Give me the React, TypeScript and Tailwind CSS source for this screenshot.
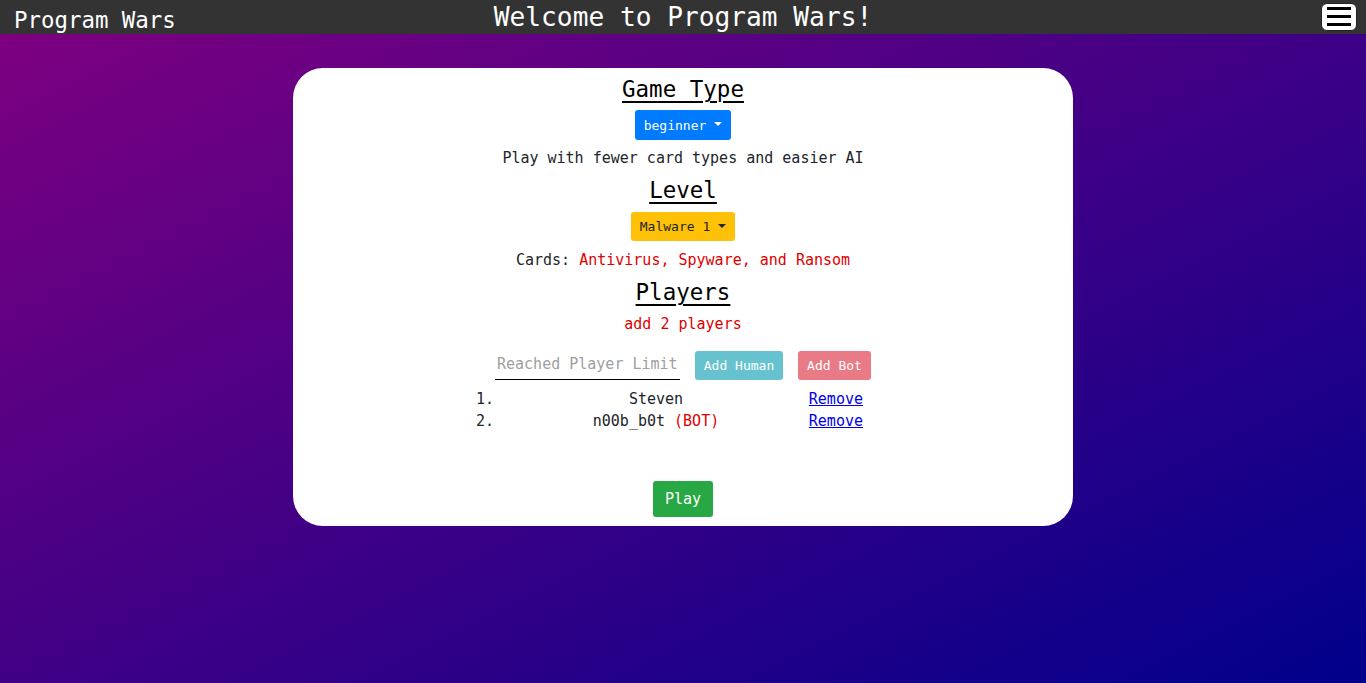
import React from 'react';

const mono = { fontFamily: '"DejaVu Sans Mono", "Liberation Mono", monospace' };

const players = [
  { name: 'Steven', bot: false },
  { name: 'n00b_b0t', bot: true },
];

const Caret = () => (
  <span className="inline-block ml-[8px] align-middle w-0 h-0 border-l-[4px] border-r-[4px] border-t-[4px] border-l-transparent border-r-transparent border-t-current relative top-[-2px]" />
);

export default function App() {
  return (
    <div
      className="w-full min-h-[683px] bg-[linear-gradient(to_bottom_right,#800080,#00008b)]"
      style={mono}
    >
      <header className="h-[34px] bg-[#333333] flex items-center justify-between px-[14px] relative">
        <span className="text-white text-[22.4px] leading-none mt-[7px]">Program Wars</span>
        <h1 className="absolute left-0 right-0 text-center text-white text-[26.2px] leading-none top-[4px] pointer-events-none">
          Welcome to Program Wars!
        </h1>
        <button className="w-[36px] h-[28px] bg-white rounded-[6px] border border-[#222] flex flex-col items-center justify-center gap-[5px] mr-[-5px] mt-[-1px]">
          <span className="block w-[24px] h-[3px] bg-black" />
          <span className="block w-[24px] h-[3px] bg-black" />
          <span className="block w-[24px] h-[3px] bg-black" />
        </button>
      </header>

      <main className="flex justify-center pt-[34px]">
        <div className="w-[780px] bg-white rounded-[30px] pt-[8px] pb-[9px] flex flex-col items-center text-[#212529]">
          <h2 className="text-[22.5px] leading-[27px] underline underline-offset-[4px] text-black">Game Type</h2>
          <button className="mt-[7px] h-[30px] px-[9px] rounded-[3px] bg-[#007bff] text-white text-[13px] leading-none">
            beginner<Caret />
          </button>
          <p className="mt-[7px] text-[15px] leading-[22px]">Play with fewer card types and easier AI</p>

          <h2 className="mt-[8px] text-[22.5px] leading-[27px] underline underline-offset-[4px] text-black">Level</h2>
          <button className="mt-[8px] h-[29px] px-[9px] rounded-[3px] bg-[#ffc107] text-[#212529] text-[13px] leading-none">
            Malware 1<Caret />
          </button>
          <p className="mt-[8px] text-[15px] leading-[22px]">
            Cards: <span className="text-[#e00000]">Antivirus, Spyware, and Ransom</span>
          </p>

          <h2 className="mt-[8px] text-[22.5px] leading-[27px] underline underline-offset-[4px] text-black">Players</h2>
          <p className="mt-[7px] text-[15px] leading-[22px] text-[#e00000]">add 2 players</p>

          <div className="mt-[16px] flex items-center gap-[15px]">
            <input
              disabled
              placeholder="Reached Player Limit"
              className="w-[185px] h-[29px] border-b-[1.5px] border-black text-[15px] px-[2px] pb-[2px] placeholder:text-[#a0a0a0] bg-transparent outline-none"
              style={mono}
            />
            <button className="h-[29px] w-[88px] rounded-[3px] bg-[#17a2b8] opacity-65 text-white text-[13px]">Add Human</button>
            <button className="h-[29px] w-[73px] rounded-[3px] bg-[#dc3545] opacity-65 text-white text-[13px]">Add Bot</button>
          </div>

          <div className="mt-[8px] self-start ml-[183px] w-[388px] text-[15px] leading-[22px]">
            {players.map((p, i) => (
              <div key={p.name} className="flex">
                <span className="w-[40px]">{i + 1}.</span>
                <span className="w-[280px] text-center">
                  {p.name}
                  {p.bot && <span className="text-[#e00000]"> (BOT)</span>}
                </span>
                <a href="#" className="w-[67px] text-right text-[#0000ee] underline">Remove</a>
              </div>
            ))}
          </div>

          <button className="mt-[49px] h-[36px] w-[60px] rounded-[3px] bg-[#28a745] text-white text-[15px]">Play</button>
        </div>
      </main>
    </div>
  );
}
